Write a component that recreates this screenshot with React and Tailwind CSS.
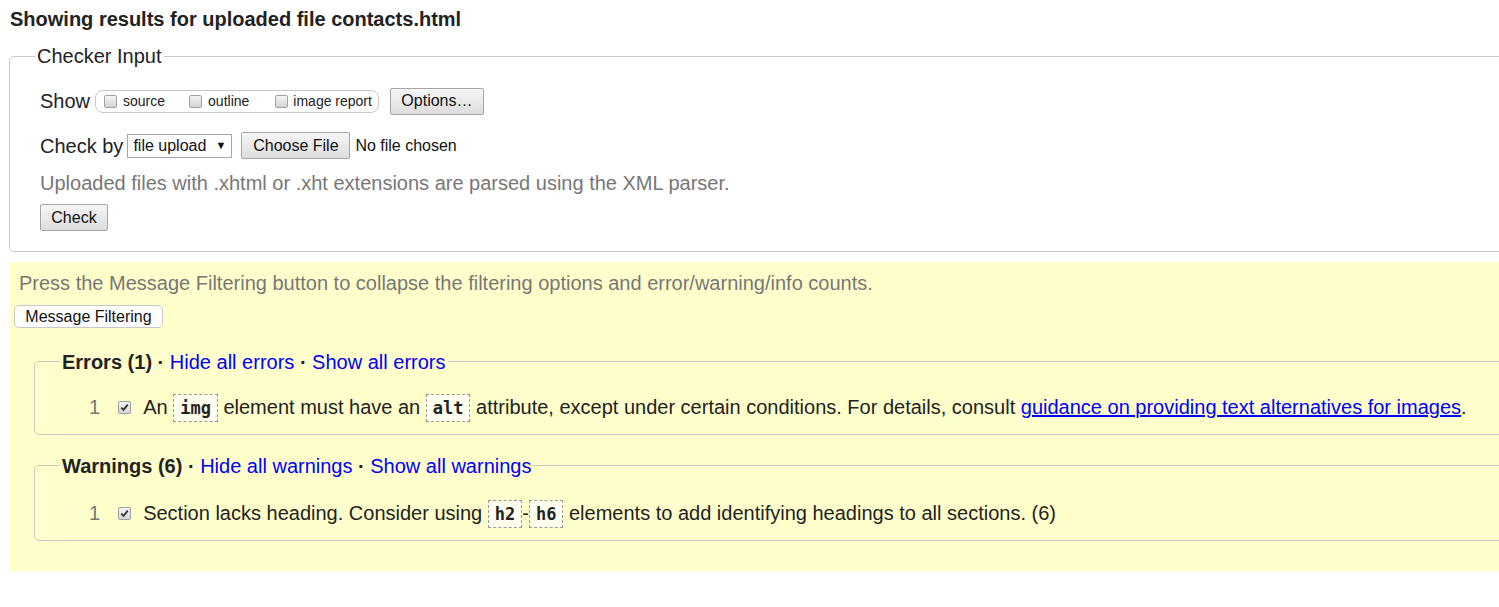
// Validator results page — checker input + message filtering
import React from 'react'

function Box({ checked }) {
  return (
    <span className="inline-flex items-center justify-center w-[13px] h-[13px] rounded-[2px] border border-[#a0a0a0] bg-gradient-to-b from-[#f4f4f4] to-[#d4d4d4] shrink-0">
      {checked && (
        <svg width="9" height="9" viewBox="0 0 9 9">
          <path d="M1.3 4.6 L3.5 6.8 L7.8 1.6" fill="none" stroke="#333" strokeWidth="1.8" />
        </svg>
      )}
    </span>
  )
}

function Btn({ children, className = '' }) {
  return (
    <button className={'h-[27px] px-[10px] text-[16px] leading-none text-[#111] border border-[#a6a6a6] rounded-[2px] bg-gradient-to-b from-[#f6f6f6] to-[#dddddd] ' + className}>
      {children}
    </button>
  )
}

function Code({ children }) {
  return (
    <code className="font-['DejaVu_Sans_Mono',monospace] text-[17px] font-bold text-[#222] border border-dashed border-[#999] bg-[#fffff0] px-[6px] py-[3px]">
      {children}
    </code>
  )
}

function Group({ title, count, what, children, className = '', gap = 'mt-[21px]' }) {
  return (
    <fieldset className={'ml-[25px] w-[1600px] border border-[#c8c8c8] rounded-[5px] pl-[25px] pb-[14px] ' + className}>
      <legend className="px-[2px] leading-[24px]">
        <b className="font-bold text-[#222]">{title} ({count})</b>
        <span className="font-bold text-[#222]"> · </span>
        <a className="text-[#0000ff]">Hide all {what}</a>
        <span className="font-bold text-[#222]"> · </span>
        <a className="text-[#0000ff]">Show all {what}</a>
      </legend>
      <div className={'flex items-center leading-[24px] ' + gap}>
        <span className="w-[29px]" />
        <span className="text-[#777]">1</span>
        <span className="ml-[18px] mr-[12px] flex"><Box checked /></span>
        <p className="text-[#222]">{children}</p>
      </div>
    </fieldset>
  )
}

export default function App() {
  return (
    <div className="w-full h-[607px] overflow-hidden bg-white text-[20px] text-[#222] font-['Liberation_Sans',Arial,sans-serif]">
      <h2 className="pl-[10px] pt-[8px] text-[20px] font-bold leading-[23px] text-[#222]">
        Showing results for uploaded file contacts.html
      </h2>

      <fieldset className="ml-[9px] mt-[13px] w-[1600px] border border-[#c8c8c8] rounded-[5px] pl-[25px] pb-[20px]">
        <legend className="px-[2px] leading-[24px] text-[#222]">Checker Input</legend>
        <div className="pl-[5px]">
          <div className="mt-[19px] h-[28px] flex items-center">
            <span className="leading-[24px]">Show</span>
            <div className="ml-[5px] h-[23px] flex items-center rounded-[8px] border border-[#c8c8c8] pl-[8px] pr-[6px] text-[14px] text-[#222]">
              <Box />
              <span className="ml-[6px] mr-[24px]">source</span>
              <Box />
              <span className="ml-[6px] mr-[26px]">outline</span>
              <Box />
              <span className="ml-[5px]">image report</span>
            </div>
            <Btn className="ml-[11px] w-[94px]">Options…</Btn>
          </div>

          <div className="mt-[17px] h-[27px] flex items-center">
            <span className="leading-[24px]">Check by</span>
            <div className="ml-[4px] h-[24px] w-[105px] flex items-center justify-between border border-[#a6a6a6] bg-white px-[5px] text-[16px] text-[#111]">
              <span>file upload</span>
              <span className="text-[11px]">▼</span>
            </div>
            <Btn className="ml-[9px] w-[109px]">Choose File</Btn>
            <span className="ml-[5px] text-[16px] text-[#111]">No file chosen</span>
          </div>

          <p className="mt-[12px] leading-[24px] text-[#777]">
            Uploaded files with .xhtml or .xht extensions are parsed using the XML parser.
          </p>

          <Btn className="mt-[9px] w-[68px] block">Check</Btn>
        </div>
      </fieldset>

      <div className="ml-[9px] mt-[10px] w-[1600px] bg-[#ffffcc] pt-[9px] pb-[30px]">
        <p className="pl-[10px] leading-[24px] text-[#777]">
          Press the Message Filtering button to collapse the filtering options and error/warning/info counts.
        </p>
        <button className="ml-[5px] mt-[10px] h-[23px] w-[149px] rounded-[5px] border border-[#c8c8c8] bg-white text-[16px] text-[#111] leading-none">
          Message Filtering
        </button>

        <Group title="Errors" count={1} what="errors" className="mt-[20px]">
          An <Code>img</Code> element must have an <Code>alt</Code> attribute, except under certain conditions. For details, consult{' '}
          <a className="text-[#0000ff] underline">guidance on providing text alternatives for images</a>.
        </Group>

        <Group title="Warnings" count={6} what="warnings" className="mt-[19px]" gap="mt-[23px]">
          Section lacks heading. Consider using <Code>h2</Code>-<Code>h6</Code> elements to add identifying headings to all sections. (6)
        </Group>
      </div>
    </div>
  )
}
